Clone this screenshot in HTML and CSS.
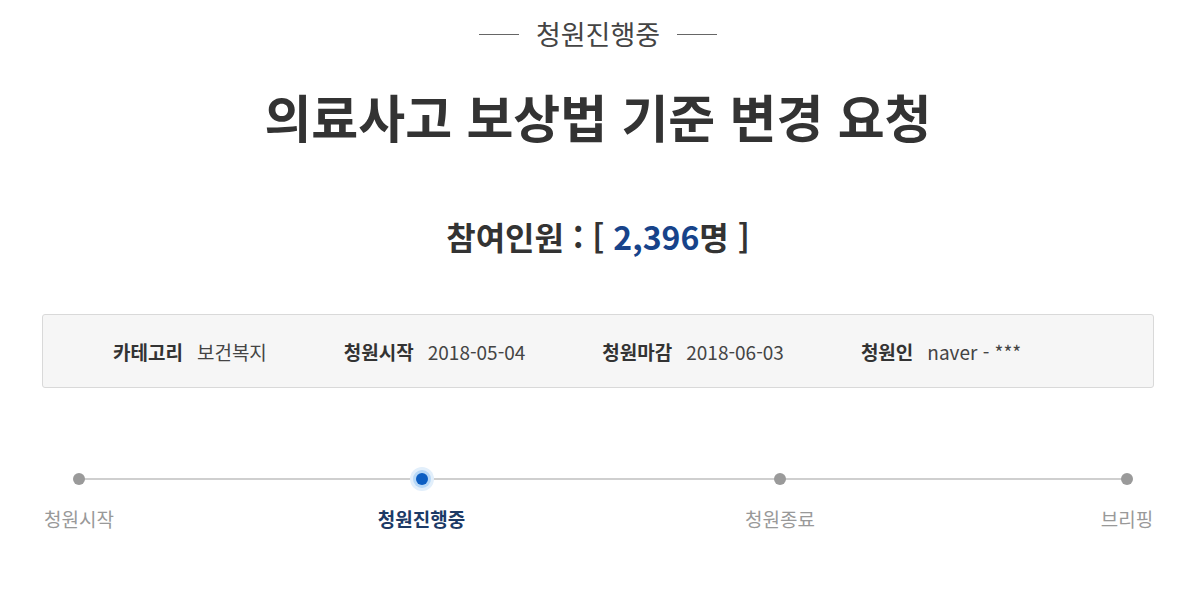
FILE: index.html
```html
<!DOCTYPE html>
<html lang="ko">
<head>
<meta charset="utf-8">
<title>청원</title>
<link rel="stylesheet" href="styles.css">
</head>
<body>
<div class="page">
  <div class="status"><span class="line"></span><span class="status-text">청원진행중</span><span class="line"></span></div>
  <h1 class="title">의료사고 보상법 기준 변경 요청</h1>
  <div class="count">참여인원 : [ <span class="num">2,396</span>명 ]</div>
  <div class="info">
    <div class="item"><span class="label">카테고리</span><span class="value">보건복지</span></div>
    <div class="item"><span class="label">청원시작</span><span class="value">2018-05-04</span></div>
    <div class="item"><span class="label">청원마감</span><span class="value">2018-06-03</span></div>
    <div class="item"><span class="label">청원인</span><span class="value">naver - ***</span></div>
  </div>
  <div class="progress">
    <div class="track"></div>
    <div class="steps">
      <div class="step s1"><span class="dot"></span><span class="step-label">청원시작</span></div>
      <div class="step s2 active"><span class="dot"></span><span class="step-label">청원진행중</span></div>
      <div class="step s3"><span class="dot"></span><span class="step-label">청원종료</span></div>
      <div class="step s4"><span class="dot"></span><span class="step-label">브리핑</span></div>
    </div>
  </div>
</div>
</body>
</html>
```
FILE: styles.css
```css
* { box-sizing: border-box; }
html, body { margin: 0; padding: 0; background: #fff; }
body { font-family: "Noto Sans CJK KR", "Noto Sans", sans-serif; color: #333; }
.page { width: 1112px; margin-left: 42px; padding-top: 16px; }
.status { display: flex; justify-content: center; align-items: center; gap: 17px; height: 36px; }
.status .line { width: 40px; height: 1px; background: #666; }
.status-text { font-size: 27px; color: #444; line-height: 36px; }
.title { margin: 32px 0 0; text-align: center; font-size: 51px; font-weight: 700; color: #333; line-height: 64px; }
.count { margin-top: 66px; text-align: center; font-size: 32px; font-weight: 700; color: #333; line-height: 44px; }
.count .num { color: #17438a; }
.info { margin-top: 56px; height: 74px; background: #f6f6f6; border: 1px solid #d9d9d9; border-radius: 3px; display: flex; align-items: center; padding-left: 70px; gap: 77px; }
.item { display: flex; align-items: center; gap: 14px; font-size: 19px; }
.label { font-weight: 700; color: #333; }
.value { color: #444; }
.progress { position: relative; margin-top: 82px; }
.track { position: absolute; left: 36px; right: 27px; top: 8px; height: 2px; background: #cfcfcf; }
.steps { display: flex; position: relative; }
.step { display: flex; flex-direction: column; align-items: center; }
.s1 { width: 74px; }
.s2 { width: 91px; margin-left: 260px; }
.s3 { width: 74px; margin-left: 276px; }
.s4 { width: 54px; margin-left: 283px; }
.dot { width: 12px; height: 12px; border-radius: 50%; background: #9a9a9a; margin-top: 3px; }
.active .dot { background: #0c5ec2; box-shadow: 0 0 0 3px #b7d8f7, 0 0 0 6px #e2effb; }
.step-label { margin-top: 20px; font-size: 19px; color: #999; line-height: 28px; white-space: nowrap; }
.active .step-label { color: #1c3a66; font-weight: 700; }
```
